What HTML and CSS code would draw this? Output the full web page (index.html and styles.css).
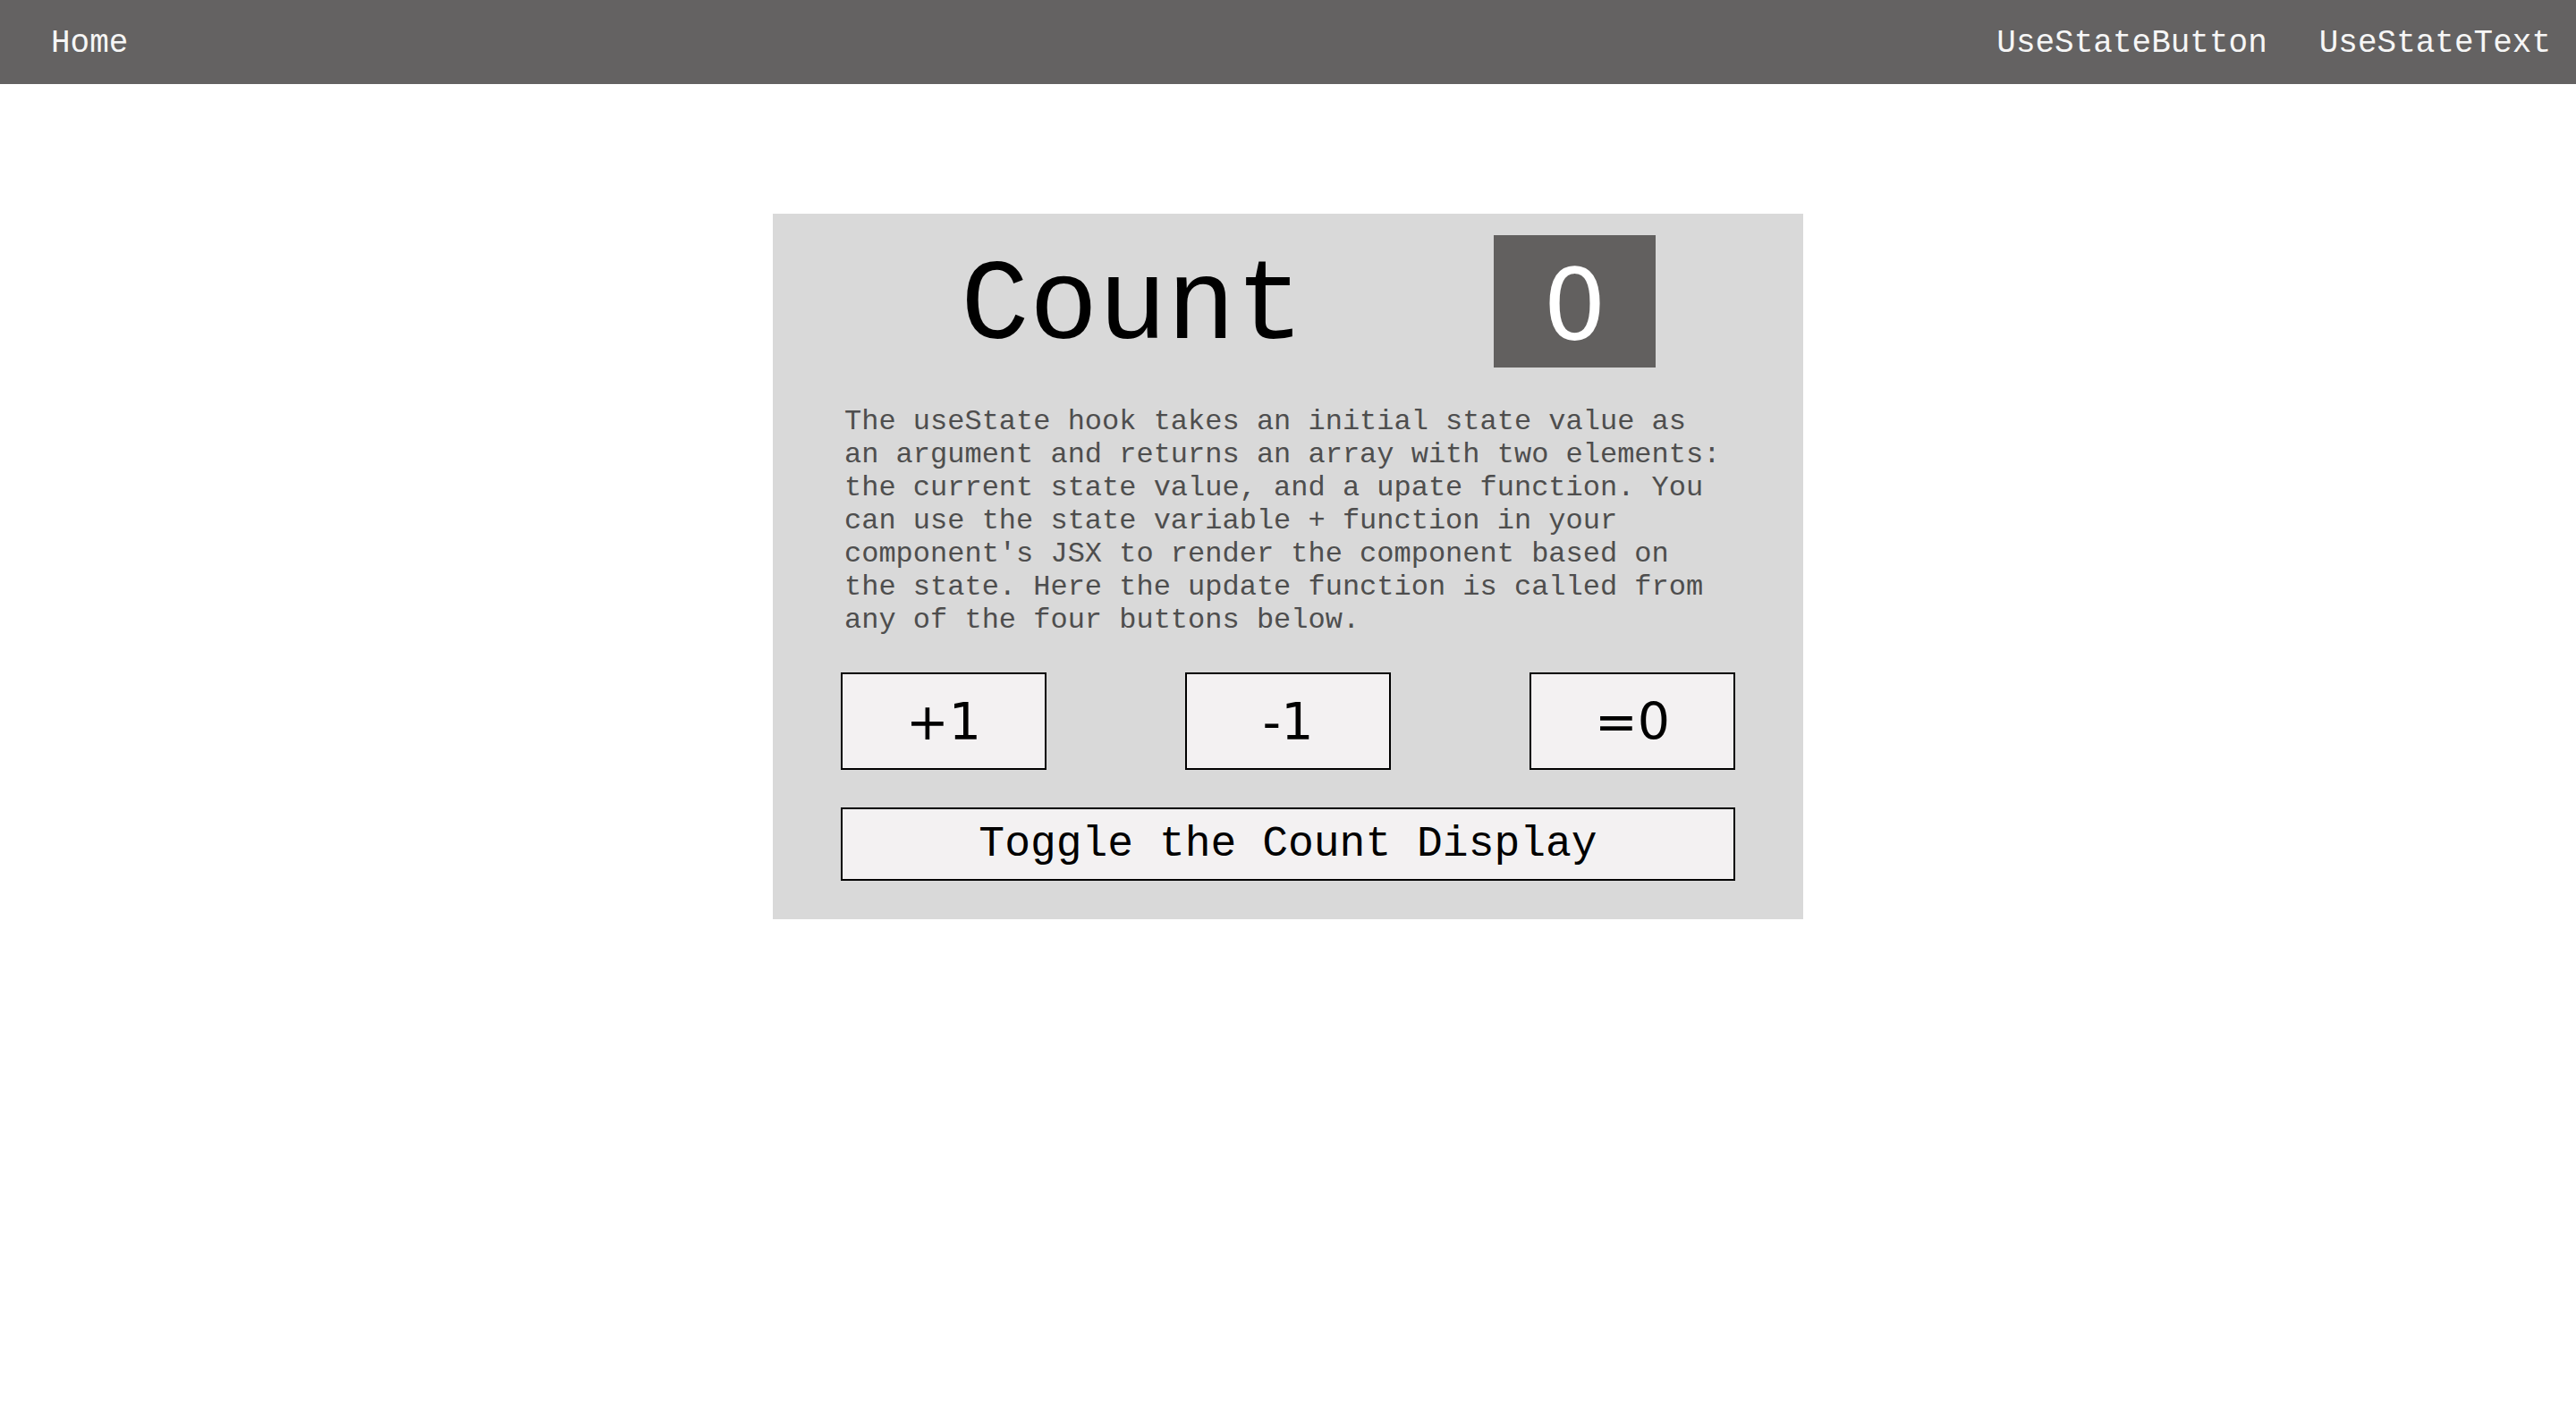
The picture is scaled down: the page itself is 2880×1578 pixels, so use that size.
FILE: index.html
```html
<!DOCTYPE html>
<html lang="en">
<head>
<meta charset="utf-8">
<title>UseState</title>
<link rel="stylesheet" href="styles.css">
</head>
<body>
  <nav class="topbar">
    <a class="nav-link" href="#">Home</a>
    <div class="nav-right">
      <a class="nav-link" href="#">UseStateButton</a>
      <a class="nav-link" href="#">UseStateText</a>
    </div>
  </nav>
  <main class="page">
    <section class="card">
      <div class="title-row">
        <h1 class="title">Count</h1>
        <div class="count-box">0</div>
      </div>
      <p class="desc">The useState hook takes an initial state value as an argument and returns an array with two elements: the current state value, and a upate function. You can use the state variable + function in your component's JSX to render the component based on the state. Here the update function is called from any of the four buttons below.</p>
      <div class="btn-row">
        <button class="op-btn">+1</button>
        <button class="op-btn">-1</button>
        <button class="op-btn">=0</button>
      </div>
      <button class="toggle-btn">Toggle the Count Display</button>
    </section>
  </main>
</body>
</html>
```

FILE: styles.css
```css
html, body {
  margin: 0;
  padding: 0;
  background: #ffffff;
}

body {
  font-family: "Liberation Mono", "Courier New", monospace;
}

.topbar {
  height: 94px;
  background: #646262;
  display: flex;
  align-items: center;
  justify-content: space-between;
  padding: 2px 28px 0 57px;
  box-sizing: border-box;
}

.nav-right {
  display: flex;
  gap: 58px;
}

.nav-link {
  color: #f6f6f6;
  text-decoration: none;
  font-size: 36px;
  font-family: "Liberation Mono", "Courier New", monospace;
}

.page {
  display: flex;
  justify-content: center;
  padding-top: 145px;
}

.card {
  width: 1152px;
  box-sizing: border-box;
  background: #d9d9d9;
  padding: 24px 76px 43px;
  display: flex;
  flex-direction: column;
}

.title-row {
  display: flex;
  align-items: flex-start;
  gap: 212px;
  padding-left: 134px;
  height: 148px;
}

.title {
  margin: 0;
  padding-top: 14px;
  line-height: 134px;
  font-size: 128px;
  font-weight: normal;
  color: #000;
  font-family: "Liberation Mono", "Courier New", monospace;
}

.count-box {
  width: 181px;
  height: 148px;
  background: #62605f;
  color: #ffffff;
  font-family: "DejaVu Sans", sans-serif;
  font-size: 111px;
  display: flex;
  align-items: center;
  justify-content: center;
  padding-top: 6px;
  box-sizing: border-box;
}

.desc {
  margin: 42px 4px 0;
  font-size: 32px;
  line-height: 37px;
  color: #4e4e4e;
}

.btn-row {
  display: flex;
  justify-content: space-between;
  margin-top: 40px;
}

.op-btn {
  width: 230px;
  height: 109px;
  box-sizing: border-box;
  background: #f3f1f2;
  border: 2px solid #000;
  border-radius: 0;
  font-family: "DejaVu Sans", sans-serif;
  font-size: 57px;
  color: #000;
  padding: 0;
}

.toggle-btn {
  margin-top: 42px;
  height: 82px;
  width: 100%;
  box-sizing: border-box;
  background: #f3f1f2;
  border: 2px solid #000;
  border-radius: 0;
  font-family: "Liberation Mono", "Courier New", monospace;
  font-size: 48px;
  color: #000;
  padding: 0;
}
```
